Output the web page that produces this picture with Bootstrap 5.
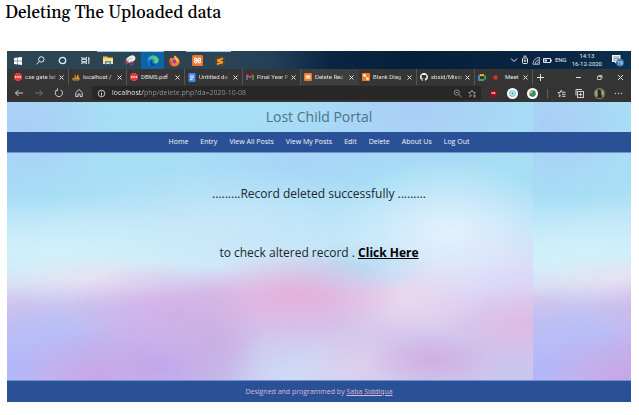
<!DOCTYPE html>
<html lang="en">
<head>
<meta charset="utf-8">
<meta name="viewport" content="width=device-width, initial-scale=1">
<title>Lost Child Portal</title>
<link href="https://cdn.jsdelivr.net/npm/bootstrap@5.3.0/dist/css/bootstrap.min.css" rel="stylesheet">
<style>
  body { background: #fff; font-family: "Open Sans", "Noto Sans", sans-serif; font-size: 7px; line-height: 10px; color: #222; }
  .doc-title { font-family: Gelasio, "Liberation Serif", serif; font-size: 17px; line-height: 26px; color: #000; padding: 0 5px; }
  .screen { margin: 25px 8px 13px 7px; }
  svg { display: block; flex: none; }
  .plain { background: none; border: 0; padding: 0; color: inherit; font: inherit; display: flex; align-items: center; justify-content: center; }
  .line-ico { fill: none; stroke: currentColor; stroke-width: 1; }

  .taskbar { height: 18px; color: #e4ebf0; background: linear-gradient(90deg, #2b4553 0, #2a4454 35%, #24405a 42%, #0b2442 52%, #06203c 65%, #0a2644 90%, #0c3150 100%); }
  .apps { display: grid; grid-template-columns: repeat(10, 1fr); width: 224px; }
  .apps .plain { border-top: 1px solid transparent; }
  .apps .running { border-top-color: #9ccbee; }
  .apps .current { background: #0c63a5; }
  .tray { padding-right: 7px; gap: 3px; font-family: Roboto, sans-serif; font-size: 6px; }
  .clock { line-height: 8px; text-align: center; padding: 0 6px 0 2px; }

  .tabs { height: 16px; background: #353535; color: #e2e2e2; padding-left: 4px; font-family: Roboto, sans-serif; font-size: 6px; }
  .tab-item { flex: 0 1 58px; min-width: 0; padding: 0 4px 0 3px; gap: 3px; border-right: 1px solid #555; }
  .tab-item.open { background: #3e3e3e; border-color: #3e3e3e; }
  .tab-item .name { flex: 1 1 0; min-width: 0; white-space: nowrap; justify-content: flex-start; }
  .tab-item .faded { -webkit-mask-image: linear-gradient(90deg, #000 80%, #0005); mask-image: linear-gradient(90deg, #000 80%, #0005); }
  .win-controls { gap: 14px; padding-right: 7px; color: #ddd; }

  .toolbar { height: 17px; background: #343434; color: #d0d0d0; padding: 0 8px 1px 7px; }
  .nav-icons { gap: 10px; padding-right: 8px; }
  .address { flex: 1 1 0; min-width: 0; height: 14px; background: #272727; border-radius: 2px; padding: 0 4px 0 5px; gap: 6px; }
  .address input { flex: 1 1 0; min-width: 0; border: 0; padding: 0; outline: 0; font-family: "Open Sans", sans-serif; font-size: 7px; line-height: 12px; color: #9a9a9a;
    background: linear-gradient(90deg, #fff 32px, #969696 32px); -webkit-background-clip: text; background-clip: text; -webkit-text-fill-color: transparent; }
  .extensions { gap: 9px; padding-left: 8px; }
  .extensions .vr { height: 9px; align-self: center; opacity: .3; }

  .portal { background-color: #c8e6f8; background-repeat: repeat-x; background-size: 84.3% 100%;
    background-image:
      radial-gradient(13% 9% at 81% 86%, #d2acdfdd, #d2acdf00),
      radial-gradient(16% 12% at 99% 74%, #dfb8e2dd, #dfb8e200),
      radial-gradient(20% 15% at 55% 64%, #e4aedcee, #e4aedc00),
      radial-gradient(15% 9% at 66% 55%, #b2dcf2ee, #b2dcf200),
      radial-gradient(13% 18% at 54% 93%, #cfe0f8dd, #cfe0f800),
      radial-gradient(14% 16% at 66% 89%, #e2d2eecc, #e2d2ee00),
      radial-gradient(15% 14% at 76% 66%, #eddaeecc, #eddaee00),
      radial-gradient(22% 24% at 84% 43%, #e2f1fdff, #e2f1fd00),
      radial-gradient(30% 22% at 93% 59%, #dcd4f7ff, #dcd4f700),
      radial-gradient(10% 20% at 39% 79%, #c8aedfbb, #c8aedf00),
      radial-gradient(20% 18% at 31% 71%, #d2ace6dd, #d2ace600),
      radial-gradient(18% 16% at 17% 92%, #c8a6e4ee, #c8a6e400),
      radial-gradient(20% 18% at 29% 88%, #bda4eeee, #bda4ee00),
      radial-gradient(20% 24% at 1% 91%, #adb6fcee, #adb6fc00),
      radial-gradient(24% 18% at 13% 77%, #b6bff7ee, #b6bff700),
      radial-gradient(20% 9% at 17% 60%, #ecdff0dd, #ecdff000),
      radial-gradient(36% 18% at 10% 51%, #d2f1fbff, #d2f1fb00),
      radial-gradient(36% 20% at 42% 41%, #cde7f9cc, #cde7f900),
      radial-gradient(22% 16% at 55% 19%, #a8d2f8cc, #a8d2f800),
      radial-gradient(26% 22% at 78% 3%, #aaccf6ee, #aaccf600),
      radial-gradient(18% 25% at 3% 8%, #aaccf6ee, #aaccf600),
      linear-gradient(180deg, #a6dff5 0, #a7def5 30%, #bbe5f7 44%, #cfe8f8 55%, #d8c6ea 65%, #d0c4ec 80%, #cac6ec 93%); }
  .portal-title { font-size: 14px; line-height: 30px; font-weight: 400; color: #4c7287; margin: 0; }
  .band { background: #2a5196; border-color: #6f93cc !important; }
  .menu { gap: 12px; height: 21px; }
  .menu a { color: #f2f5fa; text-decoration: none; padding: 0; }
  .message { font-size: 12px; line-height: 20px; padding: 31px 12px 117px; color: #20262c; }
  .message p { margin: 0; }
  .message p + p { margin-top: 39px; }
  .message a { color: #000; }
  .credit { height: 22px; color: #dcb9dc; }
  .credit a { color: inherit; }
</style>
<script src="https://cdn.jsdelivr.net/npm/bootstrap@5.3.0/dist/js/bootstrap.bundle.min.js"></script>
</head>
<body>
<h1 class="doc-title m-0">Deleting The Uploaded data</h1>

<div class="screen">
  <div class="taskbar d-flex justify-content-between">
    <div class="apps">
      <button class="plain" aria-label="Start"><svg width="8" height="8" viewBox="0 0 8 8" fill="#fff"><path d="M0 1l3.6-.5v3.2H0zM4 .4L8 0v3.7H4zM0 4.2h3.6v3.3L0 7zM4 4.2h4V8l-4-.5z"/></svg></button>
      <button class="plain" aria-label="Search"><svg class="line-ico" width="9" height="9" viewBox="0 0 9 9"><circle cx="5.3" cy="3.4" r="2.7"/><path d="M3.4 5.3L.6 8.4"/></svg></button>
      <button class="plain" aria-label="Cortana"><svg class="line-ico" width="9" height="9" viewBox="0 0 9 9"><circle cx="4.5" cy="4.5" r="3.2" stroke-width="1.3"/></svg></button>
      <button class="plain" aria-label="Task view"><svg class="line-ico" width="9" height="9" viewBox="0 0 9 9"><path d="M.8 1v1.2h4.7V1M.8 8V6.8h4.7V8M.8 3.3h4.7v2.4H.8zM7.8 1v7M7 3h1.5"/></svg></button>
      <button class="plain running" aria-label="File Explorer"><svg width="10" height="9" viewBox="0 0 10 9"><path d="M0 .6h4l1 1h5V8H0z" fill="#f5c542"/><path d="M0 2.8h10V8H0z" fill="#ffe08a"/><path d="M2 5h6v3.4H6.5V6.5h-3v1.9H2z" fill="#3f97dc"/></svg></button>
      <button class="plain running" aria-label="Snipping tool"><svg width="12" height="11" viewBox="0 0 12 11"><ellipse cx="6.8" cy="4.1" rx="4.8" ry="3.2" transform="rotate(-25 6.8 4.1)" fill="#e9eef2"/><path d="M3.3 5.2l4.6-2.3" stroke="#9aaab5" stroke-width=".7"/><circle cx="2.8" cy="7.4" r="1.5" fill="none" stroke="#d44050" stroke-width="1"/><circle cx="7.5" cy="8.4" r="1.5" fill="none" stroke="#d44050" stroke-width="1"/></svg></button>
      <button class="plain running current" aria-label="Edge"><svg width="12" height="12" viewBox="0 0 12 12"><defs><linearGradient id="eg" x2="1" y2=".3"><stop stop-color="#2aa7e5"/><stop offset="1" stop-color="#62d85a"/></linearGradient></defs><circle cx="6" cy="6" r="5.6" fill="#1a7fd0"/><path d="M.5 6C.7 2.800 3 .4 6 .4c3.300 0 5.600 2.300 5.600 4.700 0 1.900-1.400 3-3 3-1.300 0-1.900-.5-1.500-1.100.7-1.200.1-2.900-1.800-2.900C3.200 4.100.8 4.500.5 6z" fill="url(#eg)"/><path d="M5.200 5c-.8 2.700 1 5 5 4.300C8 12 4.300 11.600 3 9.500 2 7.700 3 5.600 5.200 5z" fill="#0c4a94"/></svg></button>
      <button class="plain" aria-label="Firefox"><svg width="11" height="12" viewBox="0 0 11 12"><path d="M5.500 11.400C2.400 11.400.4 9.200.4 6.400c0-1.900.8-3.300 1.700-4.200l.3 1.400L4 2.800l.2 1C5.300 3 5.400 1.600 5.300.5c2 .9 2.700 2.300 2.900 3.200l.8-.8c1.200 1.300 1.600 2.600 1.600 3.700 0 2.800-2.200 4.800-5.100 4.800z" fill="#ff7a2b"/><path d="M5.300.5c2.500 1.200 4.600 3.600 4.200 6.500L7 7C6.900 4 5.200 3.500 5.300.5z" fill="#ffc83a"/><path d="M.6 5.500C.6 9 3 11.400 6 11.300c-3-.5-4-2.500-3.700-4.300z" fill="#e8304a"/><circle cx="5.500" cy="6.600" r="2" fill="#8d3dc0"/></svg></button>
      <button class="plain running" aria-label="XAMPP"><svg width="11" height="11" viewBox="0 0 11 11"><rect width="11" height="11" rx="1.500" fill="#f0762c"/><path d="M5.500 5.500H3.700a1.200 1.200 0 1 1 1.200-1.300v2.600a1.200 1.200 0 1 1-1.200-1.300h3.600A1.200 1.200 0 1 0 6.100 4.200v2.600a1.200 1.200 0 1 0 1.200-1.300" fill="none" stroke="#fff" stroke-width="1.100"/></svg></button>
      <button class="plain running" aria-label="Sublime Text"><svg width="10" height="10" viewBox="0 0 10 10"><rect width="10" height="10" rx="1" fill="#4a4440"/><path d="M8 1.500L2 3.400v2l6-1.900zM2 3.400v2l6 1.800v-2zM8 5.200L2 7v2l6-1.800z" fill="#ff9b1e"/></svg></button>
    </div>
    <div class="tray d-flex align-items-center">
      <svg class="line-ico" width="8" height="8" viewBox="0 0 8 8"><path d="M1 2.500l3 3 3-3"/></svg>
      <svg class="line-ico" width="8" height="10" viewBox="0 0 8 10"><rect x="1.500" y="3" width="5" height="5.500" rx="1"/><circle cx="4" cy="5.700" r=".8"/><path d="M2.500 1.200h3"/></svg>
      <svg class="line-ico" width="8" height="9" viewBox="0 0 8 9"><path d="M1 8A7 7 0 0 1 7 1.500M3 8a5 5 0 0 1 4-4.300M5 8a3 3 0 0 1 2-2M.8 8.300H7.400V1" stroke-width=".7"/></svg>
      <svg class="line-ico" width="9" height="7" viewBox="0 0 9 7"><path d="M.5 1.500h7v4h-7z"/><path d="M8.500 2.800v1.500"/><path d="M1.500 2.500H4v2H1.500z" fill="currentColor" stroke="none"/></svg>
      <span>ENG</span>
      <div class="clock">14:13<br>16-12-2020</div>
      <button class="plain" aria-label="Notifications"><svg width="13" height="13" viewBox="0 0 13 13"><path d="M1 1h8.500v7H5.500L4 9.800V8H1z" fill="#f3f6f8"/><path d="M2.300 3h6M2.300 4.600h6M2.300 6.200h3" stroke="#456" stroke-width=".6"/><circle cx="9" cy="8.600" r="3.900" fill="#3d7cab"/><text x="9" y="10.500" text-anchor="middle" font-size="5" fill="#e8f2fa">19</text></svg></button>
    </div>
  </div>

  <div class="tabs d-flex">
    <div class="tab-item d-flex align-items-center"><svg width="8" height="8" viewBox="0 0 8 8"><rect y="1" width="8" height="6" rx="1.500" fill="#dd3c38"/><path d="M1.800 0h4.400v8H1.800z" fill="#dd3c38"/><path d="M1.600 3v2M3.200 3v2M4.800 3v2M6.400 3v2" stroke="#fff" stroke-width=".8"/></svg><button class="plain name faded">cse gate lat</button><button class="plain" aria-label="Close tab"><svg class="line-ico" width="5" height="5" viewBox="0 0 5 5"><path d="M.5.5l4 4m0-4l-4 4"/></svg></button></div>
    <div class="tab-item d-flex align-items-center"><svg width="8" height="8" viewBox="0 0 8 8"><path d="M2.500 5L3 .5 4 5zM4.200 5L6 1l1 4z" fill="#e9a23b"/><path d="M0 5h8L7 7.500H1z" fill="#d98a26"/><path d="M1.500 6.200h5" stroke="#555" stroke-width=".6"/></svg><button class="plain name">localhost /</button><button class="plain" aria-label="Close tab"><svg class="line-ico" width="5" height="5" viewBox="0 0 5 5"><path d="M.5.5l4 4m0-4l-4 4"/></svg></button></div>
    <div class="tab-item d-flex align-items-center"><svg width="8" height="8" viewBox="0 0 8 8"><rect y="1" width="8" height="6" rx="1.500" fill="#dd3c38"/><path d="M1.800 0h4.400v8H1.800z" fill="#dd3c38"/><path d="M1.600 3v2M3.200 3v2M4.800 3v2M6.400 3v2" stroke="#fff" stroke-width=".8"/></svg><button class="plain name">DBMS.pdf</button><button class="plain" aria-label="Close tab"><svg class="line-ico" width="5" height="5" viewBox="0 0 5 5"><path d="M.5.5l4 4m0-4l-4 4"/></svg></button></div>
    <div class="tab-item d-flex align-items-center"><svg width="8" height="9" viewBox="0 0 8 9"><rect x=".5" width="7" height="9" rx=".8" fill="#4387f0"/><path d="M2 3h4M2 4.800h4M2 6.600h2.600" stroke="#fff" stroke-width=".9"/></svg><button class="plain name faded">Untitled do</button><button class="plain" aria-label="Close tab"><svg class="line-ico" width="5" height="5" viewBox="0 0 5 5"><path d="M.5.5l4 4m0-4l-4 4"/></svg></button></div>
    <div class="tab-item d-flex align-items-center"><svg width="8" height="8" viewBox="0 0 8 8"><path d="M1 7V2" stroke="#4285f4" stroke-width="1.500"/><path d="M7 7V2" stroke="#34a853" stroke-width="1.500"/><path d="M.7 1.700L4 4.600l3.300-2.900" fill="none" stroke="#ea4335" stroke-width="1.500"/></svg><button class="plain name faded">Final Year P</button><button class="plain" aria-label="Close tab"><svg class="line-ico" width="5" height="5" viewBox="0 0 5 5"><path d="M.5.5l4 4m0-4l-4 4"/></svg></button></div>
    <div class="tab-item open d-flex align-items-center"><svg width="8" height="8" viewBox="0 0 11 11"><rect width="11" height="11" rx="1.500" fill="#f0762c"/><path d="M5.500 5.500H3.700a1.200 1.200 0 1 1 1.200-1.300v2.600a1.200 1.200 0 1 1-1.200-1.300h3.600A1.200 1.200 0 1 0 6.100 4.200v2.600a1.200 1.200 0 1 0 1.200-1.300" fill="none" stroke="#fff" stroke-width="1.100"/></svg><button class="plain name faded">Delete Rec</button><button class="plain" aria-label="Close tab"><svg class="line-ico" width="5" height="5" viewBox="0 0 5 5"><path d="M.5.5l4 4m0-4l-4 4"/></svg></button></div>
    <div class="tab-item d-flex align-items-center"><svg width="8" height="8" viewBox="0 0 8 8"><rect width="8" height="8" rx=".8" fill="#f37a22"/><path d="M1.300 1.300h2.400v2H1.300zM4.300 4.700h2.400v2H4.300z" fill="#fff"/><path d="M2.500 3l3 2" stroke="#fff" stroke-width=".7"/></svg><button class="plain name faded">Blank Diag</button><button class="plain" aria-label="Close tab"><svg class="line-ico" width="5" height="5" viewBox="0 0 5 5"><path d="M.5.5l4 4m0-4l-4 4"/></svg></button></div>
    <div class="tab-item d-flex align-items-center"><svg width="8" height="8" viewBox="0 0 16 16" fill="#fff"><path d="M8 0C3.580 0 0 3.580 0 8c0 3.540 2.290 6.530 5.470 7.590.4.070.55-.17.55-.38 0-.19-.01-.82-.01-1.490-2.010.37-2.530-.49-2.690-.94-.09-.23-.48-.94-.82-1.130-.28-.15-.68-.52-.01-.53.63-.01 1.080.58 1.230.82.72 1.210 1.870.87 2.330.66.070-.52.280-.87.510-1.070-1.780-.2-3.640-.89-3.640-3.950 0-.87.31-1.590.82-2.150-.08-.2-.36-1.020.08-2.120 0 0 .67-.21 2.200.82a7.600 7.600 0 0 1 4 0c1.530-1.040 2.200-.82 2.200-.82.44 1.100.16 1.920.08 2.120.51.56.82 1.270.82 2.150 0 3.070-1.870 3.750-3.650 3.950.29.25.54.73.54 1.480 0 1.070-.01 1.930-.01 2.200 0 .21.150.46.550.38A8 8 0 0 0 16 8c0-4.420-3.580-8-8-8z"/></svg><button class="plain name faded">sbsid/Missi</button><button class="plain" aria-label="Close tab"><svg class="line-ico" width="5" height="5" viewBox="0 0 5 5"><path d="M.5.5l4 4m0-4l-4 4"/></svg></button></div>
    <div class="tab-item d-flex align-items-center"><svg width="8" height="7" viewBox="0 0 8 7"><path d="M0 2L2 .3h4V2H2v3H0z" fill="#4285f4"/><path d="M2 .3h4.200v1.800H2z" fill="#fbbc04"/><path d="M0 2L2 0v2z" fill="#ea4335"/><path d="M2 5h4.200L8 6V1L6.200 2.300V7H1l-1-.7V5z" fill="#34a853"/></svg><svg class="ms-1" width="5" height="5" viewBox="0 0 5 5"><circle cx="2.500" cy="2.500" r="2.300" fill="#e02c28"/></svg><button class="plain name ps-1">Meet</button><button class="plain" aria-label="Close tab"><svg class="line-ico" width="5" height="5" viewBox="0 0 5 5"><path d="M.5.5l4 4m0-4l-4 4"/></svg></button></div>
    <button class="plain ps-1" aria-label="New tab"><svg class="line-ico" width="7" height="7" viewBox="0 0 7 7"><path d="M3.500 0v7M0 3.500h7"/></svg></button>
    <div class="win-controls d-flex ms-auto">
      <button class="plain" aria-label="Minimise"><svg class="line-ico" width="7" height="7" viewBox="0 0 7 7"><path d="M1 3.500h5"/></svg></button>
      <button class="plain" aria-label="Restore"><svg class="line-ico" width="7" height="7" viewBox="0 0 7 7"><path d="M1.500 2.500h3.500v3H1.500zM2.500 1.500H6v3" stroke-width=".8"/></svg></button>
      <button class="plain" aria-label="Close window"><svg class="line-ico" width="7" height="7" viewBox="0 0 7 7"><path d="M1 1l5 5m0-5L1 6"/></svg></button>
    </div>
  </div>

  <div class="toolbar d-flex align-items-center">
    <div class="nav-icons d-flex">
      <button class="plain" aria-label="Back"><svg class="line-ico" width="10" height="10" viewBox="0 0 10 10"><path d="M9 5H1.500M4.500 2l-3 3 3 3"/></svg></button>
      <button class="plain" aria-label="Forward"><svg class="line-ico" width="10" height="10" viewBox="0 0 10 10" opacity=".4"><path d="M1 5h7.500M5.500 2l3 3-3 3"/></svg></button>
      <button class="plain" aria-label="Refresh"><svg class="line-ico" width="10" height="10" viewBox="0 0 10 10"><path d="M6.500 1.800A3.600 3.600 0 1 1 3 2M3.500.3V2.500H1.500"/></svg></button>
      <button class="plain" aria-label="Home"><svg class="line-ico" width="10" height="10" viewBox="0 0 10 10"><path d="M1.800 4.500L5 1.500l3.200 3v4H6V6H4v2.500H1.800z"/></svg></button>
    </div>
    <div class="address d-flex align-items-center">
      <svg class="line-ico" width="9" height="9" viewBox="0 0 9 9"><circle cx="4.500" cy="4.500" r="3.300" stroke-width=".9"/><path d="M4.500 4v2.500M4.500 2.500v.8"/></svg>
      <input type="text" aria-label="Address" value="localhost/php/delete.php?da=2020-10-08">
      <button class="plain" aria-label="Zoom"><svg class="line-ico" width="9" height="9" viewBox="0 0 9 9" opacity=".6"><circle cx="3.800" cy="3.500" r="2.600"/><path d="M5.800 5.500L8.500 8M2.600 3.500H5"/></svg></button>
      <button class="plain" aria-label="Add to favourites"><svg class="line-ico" width="9" height="9" viewBox="0 0 9 9" opacity=".6"><path d="M4 1l1 2.300 2.500.2-1.900 1.600M4 1L3 3.300l-2.500.2 1.900 1.600-.6 2.600L4 6.400M6.500 5.500v3M5 7h3"/></svg></button>
    </div>
    <div class="extensions d-flex align-items-center">
      <button class="plain" aria-label="uBlock"><svg width="9" height="9" viewBox="0 0 9 9"><path d="M4.500.5L8 1.500c0 3.500-.7 5.500-3.500 7C1.700 7 1 5 1 1.500z" fill="#9c0f16"/><path d="M2.800 3v1.600h1.300V3M5 3v1.700h1V3.500H5" fill="none" stroke="#fff" stroke-width=".6"/></svg></button>
      <button class="plain" aria-label="Assistant"><svg width="11" height="11" viewBox="0 0 11 11"><circle cx="5.500" cy="5.500" r="5.500" fill="#fff"/><circle cx="5.500" cy="5.500" r="2.700" fill="none" stroke="#76cbd1" stroke-width="1.300"/><circle cx="5.500" cy="5.500" r="1.100" fill="#138aa0"/></svg></button>
      <button class="plain" aria-label="Download manager"><svg width="11" height="11" viewBox="0 0 11 11"><circle cx="5.500" cy="5.500" r="5.500" fill="#fff"/><circle cx="5.500" cy="5.500" r="3.200" fill="#356da8"/><path d="M5.500 2.300a3.200 3.200 0 0 0-3.200 3.200h3.200z" fill="#e9c932"/><path d="M4.500 4.500h3V6h1.400L6 9 3.200 6h1.300z" fill="#35a12d"/></svg></button>
      <div class="vr"></div>
      <button class="plain" aria-label="Favourites"><svg class="line-ico" width="9" height="9" viewBox="0 0 9 9"><path d="M3.500 3.300L4.300 1l.9 2.300H8.500M3.500 3.300L.8 3.600l1.900 1.700-.6 2.400L4 6.500M5 5.300h3.500M5 7.300h3.500"/></svg></button>
      <button class="plain" aria-label="Collections"><svg class="line-ico" width="10" height="9" viewBox="0 0 10 9"><rect x="2.500" y="2.500" width="6" height="6"/><path d="M1 6.500v-6h6M5.500 3.700v3.600M3.700 5.500h3.600"/></svg></button>
      <button class="plain" aria-label="Profile"><svg width="11" height="11" viewBox="0 0 11 11"><circle cx="5.500" cy="5.500" r="5.500" fill="#74845c"/><path d="M3.700 2c2-1.300 3.800.3 3.300 3l1 5H3.300L4 6z" fill="#262a27"/><path d="M2.200 3v5M8.700 3v4" stroke="#b9bf8f"/></svg></button>
      <button class="plain" aria-label="More"><svg width="9" height="9" viewBox="0 0 9 9" fill="currentColor"><circle cx="1.500" cy="4.500" r=".7"/><circle cx="4.500" cy="4.500" r=".7"/><circle cx="7.500" cy="4.500" r=".7"/></svg></button>
    </div>
  </div>

  <div class="portal">
    <header class="text-center"><h2 class="portal-title">Lost Child Portal</h2></header>
    <nav class="band menu d-flex justify-content-center align-items-center border-bottom">
      <a href="#">Home</a><a href="#">Entry</a><a href="#">View All Posts</a><a href="#">View My Posts</a><a href="#">Edit</a><a href="#">Delete</a><a href="#">About Us</a><a href="#">Log Out</a>
    </nav>
    <main class="message text-center">
      <p>.........Record deleted successfully .........</p>
      <p>to check altered record . <a class="fw-bold" href="#">Click Here</a></p>
    </main>
    <footer class="band credit d-flex justify-content-center align-items-center border-top">
      <span>Designed and programmed by <a href="#">Saba Siddiqua</a></span>
    </footer>
  </div>
</div>
</body>
</html>
